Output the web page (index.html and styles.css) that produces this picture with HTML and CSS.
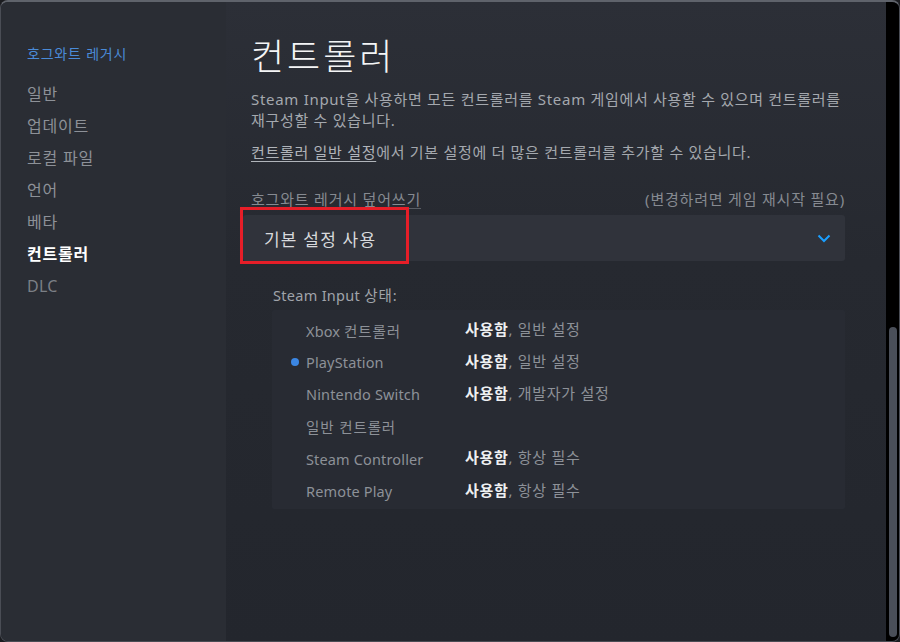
FILE: index.html
```html
<!DOCTYPE html>
<html lang="ko">
<head>
<meta charset="utf-8">
<link rel="stylesheet" href="styles.css">
</head>
<body>
<div class="window">
  <nav class="sidebar">
    <div class="game">호그와트 레거시</div>
    <ul class="nav">
      <li>일반</li>
      <li>업데이트</li>
      <li>로컬 파일</li>
      <li>언어</li>
      <li>베타</li>
      <li class="active">컨트롤러</li>
      <li class="dim">DLC</li>
    </ul>
  </nav>
  <main class="main">
    <h1 class="title">컨트롤러</h1>
    <p class="desc">Steam Input을 사용하면 모든 컨트롤러를 Steam 게임에서 사용할 수 있으며 컨트롤러를 재구성할 수 있습니다.</p>
    <p class="desc link-line"><span class="link">컨트롤러 일반 설정</span>에서 기본 설정에 더 많은 컨트롤러를 추가할 수 있습니다.</p>
    <div class="label-row">
      <span class="label">호그와트 레거시 덮어쓰기</span>
      <span class="note">(변경하려면 게임 재시작 필요)</span>
    </div>
    <div class="dropdown">
      <span class="dd-text">기본 설정 사용</span>
      <svg class="chev" width="14" height="9" viewBox="0 0 14 9"><polyline points="1.5,1.5 7,7 12.5,1.5" fill="none" stroke="#1a9fff" stroke-width="2"/></svg>
      <div class="highlight"></div>
    </div>
    <div class="status-label">Steam Input <span class="ko">상태:</span></div>
    <div class="status">
      <div class="row"><span class="dot-cell"></span><span class="name">Xbox <span class="ko">컨트롤러</span></span><span class="state"><b>사용함</b>, 일반 설정</span></div>
      <div class="row"><span class="dot-cell"><i class="dot"></i></span><span class="name">PlayStation</span><span class="state"><b>사용함</b>, 일반 설정</span></div>
      <div class="row"><span class="dot-cell"></span><span class="name">Nintendo Switch</span><span class="state"><b>사용함</b>, 개발자가 설정</span></div>
      <div class="row"><span class="dot-cell"></span><span class="name"><span class="ko">일반 컨트롤러</span></span><span class="state"></span></div>
      <div class="row"><span class="dot-cell"></span><span class="name">Steam Controller</span><span class="state"><b>사용함</b>, 항상 필수</span></div>
      <div class="row"><span class="dot-cell"></span><span class="name">Remote Play</span><span class="state"><b>사용함</b>, 항상 필수</span></div>
    </div>
  </main>
  <div class="scrolltrack"><div class="thumb"></div></div>
</div>
</body>
</html>
```
FILE: styles.css
```css
* { box-sizing: border-box; }
html, body { margin: 0; padding: 0; }
body {
  width: 900px;
  height: 642px;
  background: #1b1c20;
  font-family: "Noto Sans", "Noto Sans CJK KR", sans-serif;
  overflow: hidden;
}
.window {
  width: 900px;
  height: 642px;
  display: flex;
  border: 1px solid #4a4d55;
  border-top: 2px solid #5f636b;
  border-radius: 8px;
  overflow: hidden;
  background: #24272e;
}
.sidebar {
  width: 225px;
  flex: none;
  background: #2a2d34;
  padding: 42px 0 0 26px;
}
.game {
  font-size: 14px;
  line-height: 20px;
  letter-spacing: 0.8px;
  color: #4a8bd8;
}
.nav {
  list-style: none;
  margin: 14px 0 0;
  padding: 0;
}
.nav li {
  font-size: 16px;
  line-height: 32px;
  letter-spacing: 0.8px;
  color: #8d9198;
}
.nav li.active { color: #ffffff; font-weight: 700; }
.nav li.dim { color: #7b7f86; letter-spacing: 0.3px; }
.main {
  flex: 1;
  padding: 33px 41px 0 25px;
  background: linear-gradient(180deg, #2c2f37 0px, #262930 260px, #23262d 642px);
}
.title {
  margin: 0;
  font-size: 36px;
  line-height: 44px;
  font-weight: 300;
  color: #f4f5f6;
  letter-spacing: 3px;
}
.desc {
  margin: 10px 0 0;
  font-size: 15px;
  line-height: 21px;
  letter-spacing: 0.7px;
  color: #a4a8ae;
}
.link-line { margin-top: 11px; }
.link { text-decoration: underline; text-underline-offset: 3px; color: #b0b4ba; }
.label-row {
  margin-top: 26px;
  display: flex;
  justify-content: space-between;
  font-size: 15px;
  line-height: 20px;
  letter-spacing: 0.8px;
  color: #868a91;
}
.label { text-decoration: underline; text-underline-offset: 3px; text-decoration-color: #5a5e66; }
.dropdown {
  position: relative;
  margin: 6px 0 0 -8px;
  height: 46px;
  border-radius: 3px;
  background: #30333b;
  display: flex;
  align-items: center;
  justify-content: space-between;
  padding: 0 14px 0 21px;
}
.dd-text {
  font-size: 17px;
  letter-spacing: 1.2px;
  color: #d8dadd;
}
.chev { display: block; }
.highlight {
  position: absolute;
  left: -3px;
  top: -8px;
  width: 169px;
  height: 57px;
  border: 3px solid #e61e28;
}
.status-label {
  margin: 24px 0 0 22px;
  font-size: 14.5px;
  line-height: 20px;
  letter-spacing: 0.3px;
  color: #a0a4aa;
}
.ko { letter-spacing: 0.9px; }
.status {
  margin: 5px 0 0 21px;
  background: #282b33;
  border-radius: 2px;
  padding: 4px 0 2px;
}
.row {
  display: grid;
  grid-template-columns: 34px 159px 1fr;
  align-items: center;
  height: 32.2px;
  font-size: 14.5px;
  color: #8d9198;
}
.name { letter-spacing: 0.15px; }
.dot-cell { display: flex; justify-content: flex-end; padding-right: 7px; }
.dot {
  width: 8px;
  height: 8px;
  border-radius: 50%;
  background: #3b86e3;
}
.state { margin-top: -4px; font-size: 15px; letter-spacing: 0.7px; }
.state b { color: #eef0f2; font-weight: 700; }
.scrolltrack {
  width: 13px;
  flex: none;
  background: #000;
  padding: 325px 2px 4px 3px;
}
.thumb {
  height: 100%;
  background: #4a4f59;
  border-radius: 4px;
}
```
